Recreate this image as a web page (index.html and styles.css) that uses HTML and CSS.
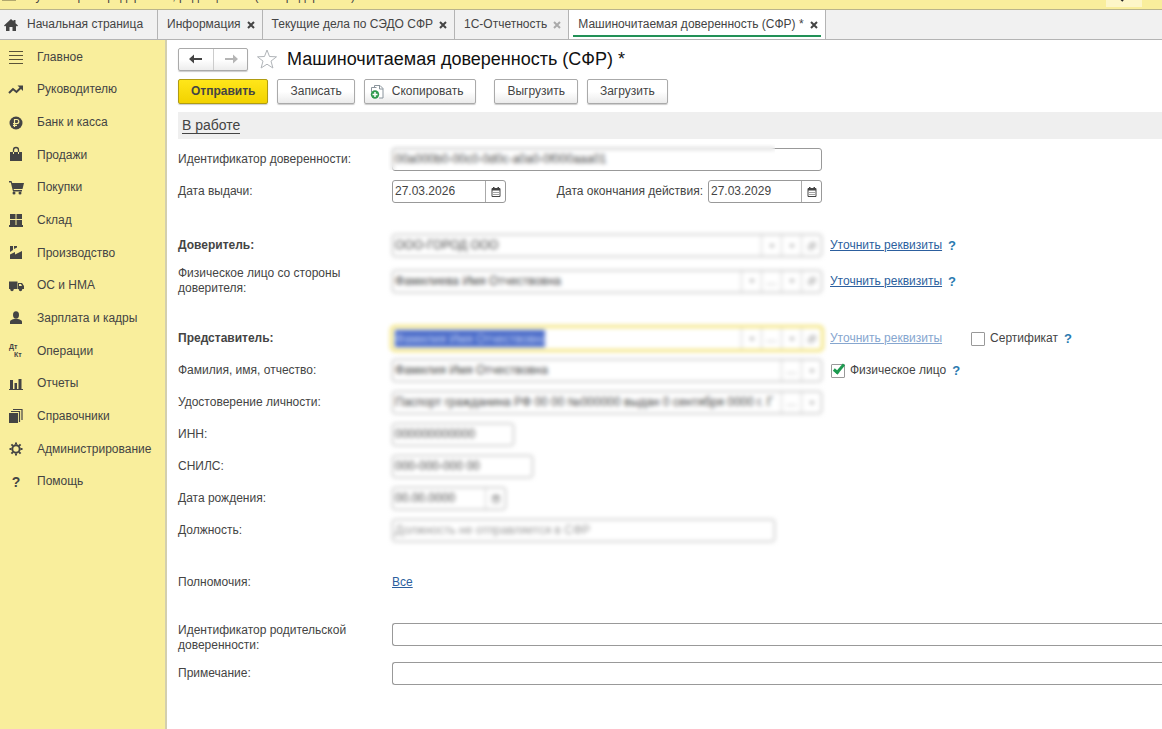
FILE: index.html
```html
<!DOCTYPE html>
<html lang="ru">
  <head>
    <meta charset="UTF-8" />
    <meta name="viewport" content="width=device-width, initial-scale=1.0" />
    <title>Машиночитаемая доверенность (СФР)</title>
    <link rel="stylesheet" href="styles.css">
  </head>
  <body>
    <!-- Общие иконки полей -->
    <svg class="sprite" aria-hidden="true">
      <symbol id="calendar" viewBox="0 0 10 10">
        <path d="M1 1.500h8v8H1z" fill="none" stroke="#444" />
        <path d="M1 1h8v2.500H1zM2 0h1.500v2H2zM6.500 0H8v2H6.500z" fill="#444" />
        <path d="M2.500 5h1v1h-1zM4.500 5h1v1h-1zM6.500 5h1v1h-1zM2.500 7h1v1h-1zM4.500 7h1v1h-1zM6.500 7h1v1h-1z" fill="#444" />
      </symbol>
      <symbol id="down" viewBox="0 0 10 10">
        <path d="M2 3.500h6L5 7z" fill="#444" />
      </symbol>
      <symbol id="open" viewBox="0 0 10 10">
        <path d="M4 1h5v5H7M1 4h5v5H1zM4 1v3" fill="none" stroke="#444" />
      </symbol>
    </svg>

    <header class="title-bar">
      <svg class="menu-icon" width="14" height="10" viewBox="0 0 14 10"><path d="M0 1h14M0 5h14M0 9h14" stroke="#6b6340" /></svg>
      <span class="app-title">Бухгалтерия предприятия, редакция 3.0 (1С:Предприятие)</span>
      <span class="search-box"><svg width="12" height="12" viewBox="0 0 12 12"><circle cx="5" cy="5" r="4" fill="none" stroke="#222" stroke-width="2" /><path d="M8 8l3 3" stroke="#222" stroke-width="2" /></svg></span>
    </header>

    <nav class="tabs">
      <a class="tab tab-home" href="#">
        <svg width="14" height="12" viewBox="0 0 14 12"><path d="M7 0L0 6.500l1 1L2 6.700V12h3.500V8h3v4H12V6.700l1 .8 1-1-2.500-2.300V1h-2v1.300z" fill="#444" /></svg>
        Начальная страница
      </a>
      <div class="tab"><a href="#">Информация</a><button class="close" type="button" aria-label="Закрыть"><svg width="8" height="8" viewBox="0 0 8 8"><path d="M1 1l6 6M7 1L1 7" /></svg></button></div>
      <div class="tab"><a href="#">Текущие дела по СЭДО СФР</a><button class="close" type="button" aria-label="Закрыть"><svg width="8" height="8" viewBox="0 0 8 8"><path d="M1 1l6 6M7 1L1 7" /></svg></button></div>
      <div class="tab"><a href="#">1С-Отчетность</a><button class="close close-muted" type="button" aria-label="Закрыть"><svg width="8" height="8" viewBox="0 0 8 8"><path d="M1 1l6 6M7 1L1 7" /></svg></button></div>
      <div class="tab tab-active"><a href="#">Машиночитаемая доверенность (СФР) *</a><button class="close" type="button" aria-label="Закрыть"><svg width="8" height="8" viewBox="0 0 8 8"><path d="M1 1l6 6M7 1L1 7" /></svg></button></div>
    </nav>

    <div class="layout">
      <aside class="sidebar">
        <ul class="menu">
          <li><a href="#"><svg viewBox="0 0 14 14"><path d="M0 1.500h14M0 5.500h14M0 9.500h14M0 13.500h14" stroke="#5a5338" /></svg>Главное</a></li>
          <li><a href="#"><svg viewBox="0 0 14 14"><path d="M0 10l4-4 3.500 3L12 4.500" fill="none" stroke="#444" stroke-width="2" /><path d="M8.500 2.500H14V8z" fill="#444" /></svg>Руководителю</a></li>
          <li><a href="#"><svg viewBox="0 0 14 14"><circle cx="7" cy="7" r="6.500" fill="#444" /><path d="M5.500 11V3.500h2.300a2 2 0 0 1 0 4H4M4 9.300h4" fill="none" stroke="#f9ee9c" stroke-width="1.200" /></svg>Банк и касса</a></li>
          <li><a href="#"><svg viewBox="0 0 14 14"><path d="M1 4h12v9H1z" fill="#444" /><path d="M4.500 6V2a2.500 2.500 0 0 1 5 0v4" fill="none" stroke="#444" stroke-width="1.300" /><path d="M4.500 4v2M9.500 4v2" stroke="#f9ee9c" /></svg>Продажи</a></li>
          <li><a href="#"><svg viewBox="0 0 14 14"><path d="M0 0h2.500l.7 2H15l-1.500 6H4.600l.3 1H13v1.500H4L1.800 1.500H0z" fill="#444" /><circle cx="5" cy="12" r="1.500" fill="#444" /><circle cx="11" cy="12" r="1.500" fill="#444" /></svg>Покупки</a></li>
          <li><a href="#"><svg viewBox="0 0 14 14"><path d="M1 0h5.500v5H1zM7.500 0H13v5H7.500zM1 6h5.500v5H1zM7.500 6H13v5H7.500zM0 11h14v2H0z" fill="#444" /></svg>Склад</a></li>
          <li><a href="#"><svg viewBox="0 0 14 14"><path d="M1 13V8.500L6 6v2.500L13 5v8zM1 0h3v4L1 6zM5 0h3v1.500L5 3z" fill="#444" /></svg>Производство</a></li>
          <li><a href="#"><svg viewBox="0 0 14 14"><path d="M0 2.500h8.500v7.500H0zM9 4h4L15 7v3H9z" fill="#444" /><path d="M10 5h2l1 2h-3z" fill="#f9ee9c" /><circle cx="3" cy="10.500" r="1.700" fill="#444" /><circle cx="11.500" cy="10.500" r="1.700" fill="#444" /></svg>ОС и НМА</a></li>
          <li><a href="#"><svg viewBox="0 0 14 14"><ellipse cx="7" cy="4" rx="3" ry="3.700" fill="#444" /><path d="M1 13v-2.500Q1 9 5 8h4q4 1 4 2.500V13z" fill="#444" /></svg>Зарплата и кадры</a></li>
          <li><a href="#"><svg viewBox="0 0 14 14"><text class="dtkt" x="0" y="5">Дт</text><text class="dtkt" x="5" y="13">Кт</text></svg>Операции</a></li>
          <li><a href="#"><svg viewBox="0 0 14 14"><path d="M1 3h3v9H1zM5.500 6h2.500v6H5.500zM9.500 2h3v10h-3zM0 12h14v1H0z" fill="#444" /></svg>Отчеты</a></li>
          <li><a href="#"><svg viewBox="0 0 14 14"><path d="M0 4h9v10H0z" fill="#444" /><path d="M2 2.500h8.500V13M4 .500h9V11" fill="none" stroke="#444" stroke-width="1.200" /></svg>Справочники</a></li>
          <li><a href="#"><svg viewBox="0 0 14 14"><circle cx="7" cy="7" r="3.700" fill="none" stroke="#444" stroke-width="2" /><path d="M7 .500v2M7 11.500v2M.500 7h2M11.500 7h2M2.400 2.400l1.500 1.500M10.100 10.100l1.500 1.500M2.400 11.600l1.500-1.500M10.100 3.900l1.500-1.500" stroke="#444" stroke-width="2" /></svg>Администрирование</a></li>
          <li><a href="#"><span class="menu-help">?</span>Помощь</a></li>
        </ul>
      </aside>

      <main class="content">
        <div class="heading">
          <div class="history">
            <button type="button" aria-label="Назад"><svg width="14" height="10" viewBox="0 0 14 10"><path d="M0 5l5-4.500V4h8v2H5v3.500z" fill="#444" /></svg></button>
            <button type="button" aria-label="Вперед"><svg width="14" height="10" viewBox="0 0 14 10"><path d="M14 5L9 .500V4H1v2h8v3.500z" fill="#b5b5b5" /></svg></button>
          </div>
          <svg class="star" width="22" height="20" viewBox="0 0 22 20"><path d="M11 1l2.500 6.500 7 .300-5.500 4.300 1.900 6.900L11 15.200 5.100 19 7 12.100 1.500 7.800l7-.300z" fill="#fff" stroke="#b0b4b8" /></svg>
          <h1>Машиночитаемая доверенность (СФР) *</h1>
        </div>

        <div class="toolbar">
          <button class="btn btn-primary" type="button">Отправить</button>
          <button class="btn" type="button">Записать</button>
          <button class="btn btn-copy" type="button">
            <svg width="14" height="16" viewBox="0 0 14 16"><path d="M4.500 3V1.500H10L13 4.500V14H9" fill="#fff" stroke="#8a949c" /><path d="M1.500 8V3.500h5" fill="none" stroke="#8a949c" /><path d="M9.500 1.500V5H13" fill="none" stroke="#8a949c" /><circle cx="5" cy="10.500" r="4.200" fill="#2f9a4e" /><path d="M5 8v5M2.500 10.500h5" stroke="#fff" stroke-width="1.500" /></svg>
            Скопировать
          </button>
          <button class="btn btn-group" type="button">Выгрузить</button>
          <button class="btn" type="button">Загрузить</button>
        </div>

        <div class="status"><a href="#">В работе</a></div>

        <form class="form">
          <div class="row">
            <label for="docId">Идентификатор доверенности:</label>
            <div class="field field-veil"><input type="text" id="docId" value="00a000b0-00c0-0d0c-a0a0-0f000aaa01" /></div>
          </div>
          <div class="row">
            <label for="issued">Дата выдачи:</label>
            <div class="dates">
              <div class="field field-date"><input type="text" id="issued" value="27.03.2026" /><button type="button" aria-label="Календарь"><svg><use href="#calendar" /></svg></button></div>
              <div class="date-end">
                <label for="expires">Дата окончания действия:</label>
                <div class="field field-date"><input type="text" id="expires" value="27.03.2029" /><button type="button" aria-label="Календарь"><svg><use href="#calendar" /></svg></button></div>
              </div>
            </div>
          </div>

          <div class="row row-group">
            <label class="strong" for="principal">Доверитель:</label>
            <div class="field hidden-data"><input type="text" id="principal" value="ООО-ГОРОД ООО" /><button type="button" aria-label="Выбрать"><svg><use href="#down" /></svg></button><button type="button" aria-label="Список"><svg><use href="#down" /></svg></button><button type="button" aria-label="Открыть"><svg><use href="#open" /></svg></button></div>
            <a class="link" href="#">Уточнить реквизиты</a>
            <a class="help" href="#">?</a>
          </div>
          <div class="row">
            <label for="person">Физическое лицо со стороны доверителя:</label>
            <div class="field hidden-data"><input type="text" id="person" value="Фамилиева Имя Отчествовна" /><button type="button" aria-label="Выбрать"><svg><use href="#down" /></svg></button><button type="button" aria-label="Еще">...</button><button type="button" aria-label="Список"><svg><use href="#down" /></svg></button><button type="button" aria-label="Открыть"><svg><use href="#open" /></svg></button></div>
            <a class="link" href="#">Уточнить реквизиты</a>
            <a class="help" href="#">?</a>
          </div>

          <div class="row row-group">
            <label class="strong" for="agent">Представитель:</label>
            <div class="field field-focus hidden-data"><div class="selection"><input type="text" id="agent" value="Фамилия Имя Отчествовна" /></div><button type="button" aria-label="Выбрать"><svg><use href="#down" /></svg></button><button type="button" aria-label="Еще">...</button><button type="button" aria-label="Список"><svg><use href="#down" /></svg></button><button type="button" aria-label="Открыть"><svg><use href="#open" /></svg></button></div>
            <a class="link link-muted" href="#">Уточнить реквизиты</a>
            <div class="check check-far"><input type="checkbox" id="cert" /><label for="cert">Сертификат</label></div>
            <a class="help help-near" href="#">?</a>
          </div>
          <div class="row">
            <label for="fullName">Фамилия, имя, отчество:</label>
            <div class="field hidden-data"><input type="text" id="fullName" value="Фамилия Имя Отчествовна" /><button type="button" aria-label="Еще">...</button><button type="button" aria-label="Список"><svg><use href="#down" /></svg></button></div>
            <div class="check"><input type="checkbox" id="individual" checked /><label for="individual">Физическое лицо</label></div>
            <a class="help help-near" href="#">?</a>
          </div>
          <div class="row">
            <label for="identity">Удостоверение личности:</label>
            <div class="field hidden-data"><input type="text" id="identity" value="Паспорт гражданина РФ 00 00 №000000 выдан 0 сентября 0000 г. Г" /><button type="button" aria-label="Еще">...</button><button type="button" aria-label="Список"><svg><use href="#down" /></svg></button></div>
          </div>
          <div class="row">
            <label for="inn">ИНН:</label>
            <div class="field field-inn hidden-data"><input type="text" id="inn" value="000000000000" /></div>
          </div>
          <div class="row">
            <label for="snils">СНИЛС:</label>
            <div class="field field-snils hidden-data"><input type="text" id="snils" value="000-000-000 00" /></div>
          </div>
          <div class="row">
            <label for="birth">Дата рождения:</label>
            <div class="field field-date hidden-data"><input type="text" id="birth" value="00.00.0000" /><button type="button" aria-label="Календарь"><svg><use href="#calendar" /></svg></button></div>
          </div>
          <div class="row">
            <label for="position">Должность:</label>
            <div class="field field-position hidden-data"><input type="text" id="position" placeholder="Должность не отправляется в СФР" /></div>
          </div>

          <div class="row row-section">
            <span class="caption">Полномочия:</span>
            <a class="link link-start" href="#">Все</a>
          </div>

          <div class="row row-top row-section">
            <label for="parentId">Идентификатор родительской доверенности:</label>
            <div class="field field-wide"><input type="text" id="parentId" /></div>
          </div>
          <div class="row">
            <label for="note">Примечание:</label>
            <div class="field field-wide"><input type="text" id="note" /></div>
          </div>
        </form>
      </main>
    </div>
  </body>
</html>
```
FILE: styles.css
```css
/* General styles */
* {
  box-sizing: border-box;
}

body {
  margin: 0;
  min-height: 100vh;
  display: flex;
  flex-direction: column;
  overflow: hidden;
  font-family: "Liberation Sans", Arial, sans-serif;
  font-size: 12px;
  line-height: 15px;
  color: #444;
  background-color: #fff;
}

a {
  color: inherit;
  text-decoration: none;
}

button,
input {
  font: inherit;
  color: inherit;
}

button {
  padding: 0;
  cursor: pointer;
}

.sprite {
  display: none;
}

/* Title bar */
.title-bar {
  display: flex;
  align-items: flex-end;
  height: 10px;
  padding: 0 20px 0 2px;
  overflow: hidden;
  background-color: #f9ee9c;
  border-bottom: 1px solid #b9b48c;
}

.menu-icon {
  margin: 0 12px 8px 0;
  flex: none;
}

.app-title {
  flex: 1;
  margin-bottom: 5px;
}

.search-box {
  display: flex;
  align-items: flex-end;
  width: 36px;
  height: 7px;
  padding: 0 6px 5px;
  margin-bottom: 2px;
  background-color: #fdf6c8;
}

/* Tabs */
.tabs {
  display: flex;
  height: 30px;
  background-color: #f1f1f1;
  border-bottom: 1px solid #b4b4b4;
}

.tab {
  position: relative;
  display: flex;
  align-items: center;
  gap: 6px;
  padding: 0 7px 0 9px;
  border-right: 1px solid #b4b4b4;
  white-space: nowrap;
}

.tab-home {
  gap: 9px;
  padding: 0 14px 0 4px;
}

.tab-active {
  background-color: #fff;
}

.tab-active::after {
  content: "";
  position: absolute;
  left: 4px;
  right: 4px;
  bottom: 2px;
  height: 2px;
  background-color: #229157;
}

.close {
  display: flex;
  border: none;
  background: none;
}

.close path {
  stroke: #444;
  stroke-width: 2;
}

.close-muted path {
  stroke: #aaa;
}

/* Sidebar */
.layout {
  display: flex;
  flex: 1;
}

.sidebar {
  flex: none;
  width: 167px;
  background-color: #f9ee9c;
  border-right: 2px solid #d3cfae;
}

.menu {
  display: grid;
  grid-auto-rows: 1fr;
  height: 457px;
  margin: 1px 0 0;
  padding: 0;
  list-style: none;
}

.menu a {
  display: flex;
  align-items: center;
  gap: 14px;
  height: 100%;
  padding-left: 9px;
}

.menu svg,
.menu-help {
  flex: none;
  width: 14px;
  height: 14px;
  overflow: visible;
}

.menu-help {
  font-size: 14px;
  font-weight: bold;
  line-height: 14px;
  text-align: center;
}

.dtkt {
  font-size: 7px;
  font-weight: bold;
  fill: #444;
}

/* Content */
.content {
  flex: 1;
  min-width: 0;
  padding: 7px 0 0 11px;
}

.heading {
  display: flex;
  align-items: center;
  height: 24px;
}

.history {
  display: flex;
  height: 23px;
  border: 1px solid #aaa;
  border-radius: 2px;
  background: linear-gradient(#fff 50%, #ededed);
  box-shadow: 0 1px 1px #ccc;
}

.history button {
  display: flex;
  align-items: center;
  justify-content: center;
  width: 34px;
  border: none;
  background: none;
}

.history button + button {
  border-left: 1px solid #ccc;
}

.star {
  margin: 0 9px 0 8px;
}

h1 {
  margin: 0;
  font-size: 18px;
  font-weight: normal;
  line-height: 24px;
  color: #111;
}

.toolbar {
  display: flex;
  gap: 9px;
  margin-top: 8px;
}

.btn {
  display: flex;
  align-items: center;
  gap: 8px;
  height: 25px;
  padding: 0 12px;
  border: 1px solid #aaa;
  border-radius: 2px;
  background: linear-gradient(#fff 50%, #ebebeb);
  box-shadow: 0 1px 1px #ccc;
}

.btn-primary {
  font-weight: bold;
  border-color: #b09c12;
  background: linear-gradient(#ffe61a, #f2d200);
}

.btn-copy {
  padding-left: 5px;
}

.btn-group {
  margin-left: 9px;
}

.status {
  margin-top: 8px;
  padding: 6px 4px;
  font-size: 14px;
  background-color: #efefef;
}

.status a {
  border-bottom: 1px solid #444;
}

/* Form */
.form {
  display: flex;
  flex-direction: column;
  gap: 9px;
  margin-top: 9px;
}

.row {
  display: flex;
  align-items: center;
  min-height: 23px;
}

.row-group {
  margin-top: 22px;
}

.row-section {
  margin-top: 20px;
}

.row-top {
  align-items: flex-start;
}

.row > label,
.caption {
  flex: none;
  width: 214px;
  padding-right: 36px;
}

.row > .strong {
  font-weight: bold;
}

.field {
  position: relative;
  display: flex;
  flex: none;
  width: 430px;
  height: 23px;
  background-color: #fff;
  border: 1px solid #999;
  border-radius: 3px;
}

.field input {
  flex: 1;
  min-width: 0;
  width: 100%;
  padding: 0 2px;
  border: none;
  outline: none;
  background: none;
}

.field input::placeholder {
  color: #999;
}

.field button {
  display: flex;
  flex: none;
  align-items: center;
  justify-content: center;
  width: 20px;
  border: none;
  border-left: 1px solid #aaa;
  background: none;
}

.field svg {
  width: 10px;
  height: 10px;
}

.hidden-data {
  border-color: #aaa;
  filter: blur(2px);
}

.hidden-data button {
  border-color: #ccc;
  color: #999;
}

.hidden-data svg {
  width: 8px;
  height: 8px;
  opacity: 0.7;
}

/* Blurred part of the identifier */
.field-veil::after {
  content: "";
  position: absolute;
  left: -5px;
  top: -5px;
  width: 387px;
  height: 26px;
  backdrop-filter: blur(2px);
}

.field-focus {
  border-color: #f3e47c;
  box-shadow: 0 0 0 2px #f3e47c;
}

.selection {
  display: flex;
  flex: 1;
  align-items: center;
}

.selection input {
  flex: none;
  width: 150px;
  height: 17px;
  margin-left: 2px;
  padding: 0;
  color: #b9c8f0;
  background-color: #4a6bc8;
}

.field-date {
  width: 114px;
}

.field-inn {
  width: 122px;
}

.field-snils {
  width: 141px;
}

.field-position {
  width: 383px;
}

.field-wide {
  flex: 1;
  border-right: none;
  border-radius: 3px 0 0 3px;
}

.dates {
  display: flex;
  justify-content: space-between;
  width: 430px;
}

.date-end {
  display: flex;
  align-items: center;
  gap: 5px;
}

.link {
  margin-left: 8px;
  color: #2c5f9e;
  text-decoration: underline;
}

.link-start {
  margin-left: 0;
}

.link-muted {
  color: #86a6cf;
}

.help {
  margin-left: 6px;
  font-size: 13px;
  font-weight: bold;
  color: #2a7ab0;
}

.check {
  display: flex;
  align-items: center;
  gap: 5px;
  margin-left: 9px;
}

.check-far {
  margin-left: 29px;
}

.check input {
  position: relative;
  appearance: none;
  width: 14px;
  height: 14px;
  margin: 0;
  background-color: #fff;
  border: 1px solid #999;
  border-radius: 1px;
}

.check input:checked::after {
  content: "";
  position: absolute;
  left: 4px;
  top: -3px;
  width: 6px;
  height: 12px;
  border: solid #1d9a50;
  border-width: 0 3px 3px 0;
  box-sizing: border-box;
  transform: rotate(40deg);
}
```
